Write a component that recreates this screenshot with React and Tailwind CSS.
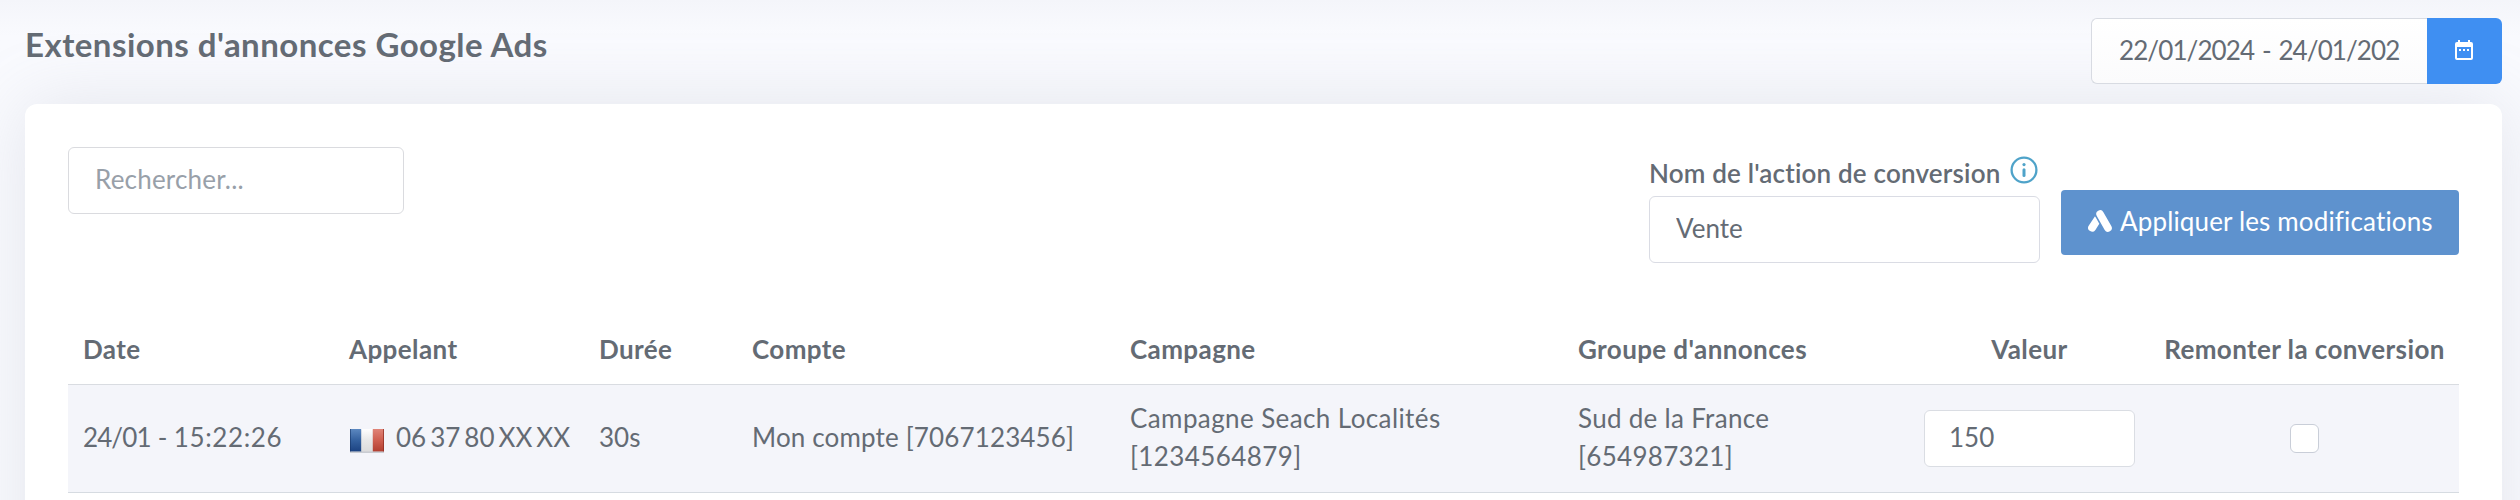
import React, { useState } from 'react';

const CalendarIcon = () => (
  <svg className="w-[18px] h-[20px]" viewBox="0 0 18 20" fill="currentColor">
    <path
      fillRule="evenodd"
      d="M3 0h2v2h8V0h2v2h1a2 2 0 0 1 2 2v14a2 2 0 0 1-2 2H2a2 2 0 0 1-2-2V4a2 2 0 0 1 2-2h1V0zM2 7v11h14V7H2z"
    />
    <path d="M4 9h2v2H4zM8 9h2v2H8zM12 9h2v2h-2z" />
  </svg>
);

const InfoIcon = () => (
  <svg className="w-[28px] h-[28px]" viewBox="0 0 28 28" fill="none">
    <circle cx="14" cy="14" r="12.4" stroke="#4fa3c9" strokeWidth="2.3" />
    <circle cx="14" cy="8.6" r="1.6" fill="#4fa3c9" />
    <path d="M14 13.8v5.6" stroke="#4fa3c9" strokeWidth="3" strokeLinecap="round" />
  </svg>
);

const AdsIcon = () => (
  <svg className="w-[24px] h-[22px]" viewBox="0 0 24 22" fill="none">
    <path d="M12.1 4.1L20 18" stroke="white" strokeWidth="7.6" strokeLinecap="round" />
    <path d="M7 6.2a5.4 5.4 0 0 0 .8 1.4l3.5 6.2-3.9 6.1a4 4 0 0 1-6.9-4L7 6.2z" fill="white" />
  </svg>
);

const FlagFr = () => (
  <svg className="w-[34px] h-[24px]" viewBox="0 0 34 24">
    <defs>
      <linearGradient id="blue" x1="0" y1="0" x2="0" y2="1">
        <stop offset="0" stopColor="#5c88c0" />
        <stop offset="0.5" stopColor="#34619f" />
        <stop offset="1" stopColor="#1c4382" />
      </linearGradient>
      <linearGradient id="white" x1="0" y1="0" x2="0" y2="1">
        <stop offset="0" stopColor="#ffffff" />
        <stop offset="0.5" stopColor="#e8e8e8" />
        <stop offset="1" stopColor="#dcdcdc" />
      </linearGradient>
      <linearGradient id="red" x1="0" y1="0" x2="0" y2="1">
        <stop offset="0" stopColor="#e08478" />
        <stop offset="0.5" stopColor="#cf5f50" />
        <stop offset="1" stopColor="#b23f31" />
      </linearGradient>
    </defs>
    <rect y="1" width="34" height="23" fill="#c9ccd2" />
    <rect width="11.4" height="22.4" fill="url(#blue)" />
    <rect x="11.4" width="11.4" height="22.4" fill="url(#white)" />
    <rect x="22.8" width="11.2" height="22.4" fill="url(#red)" />
    <path d="M.5 0v22.4" stroke="#153567" strokeOpacity=".6" />
    <path d="M33.5 0v22.4" stroke="#8c2a20" strokeOpacity=".7" />
  </svg>
);

const calls = [
  {
    day: '24/01 - ',
    time: '15:22:26',
    phone: ['06', '37', '80', 'XX', 'XX'],
    duration: '30s',
    account: 'Mon compte [7067123456]',
    campaign: ['Campagne Seach Localités', '[1234564879]'],
    group: ['Sud de la France', '[654987321]'],
    value: '150',
  },
];

const App = () => {
  const [search, setSearch] = useState('');
  const [conversion, setConversion] = useState('Vente');

  return (
    <div className="h-[500px] overflow-hidden bg-[#f9fafe] bg-linear-to-b from-[#f4f5fa] to-[#f9fafe] to-[36px] px-[25px] pr-[18px] font-['Lato',sans-serif] text-[26px] leading-[38px] text-[#646b74]">
      {/* Page header */}
      <header className="flex h-[104px] items-start justify-between">
        <h1 className="pt-[24px] text-[33px] leading-[40px] font-bold tracking-[0.47px]">
          Extensions d'annonces Google Ads
        </h1>
        <div className="mt-[18px] flex h-[66px]">
          <input
            className="w-[336px] rounded-l-[6px] border border-r-0 border-[#d8dbe2] bg-linear-to-b from-white to-[#fbfbfc] px-[27px] pb-[3px] tracking-[-0.9px] [word-spacing:2px] outline-none"
            defaultValue="22/01/2024 - 24/01/2024"
          />
          <button className="flex w-[75px] items-center justify-center rounded-r-[6px] bg-[#3f8ff2] pr-[2px] pb-[3px] text-white">
            <CalendarIcon />
          </button>
        </div>
      </header>

      {/* Card */}
      <main className="h-[500px] rounded-t-[12px] bg-white pt-[43px] pr-[43px] pl-[43px] shadow-[0_0_70px_rgba(154,161,171,0.22)]">
        <div className="flex h-[165px] items-start justify-between">
          <input
            className="h-[67px] w-[336px] rounded-[6px] border border-[#dadbdf] px-[26px] pb-[3px] tracking-[0.2px] outline-none placeholder:text-[#98a0a9]"
            placeholder="Rechercher..."
            value={search}
            onChange={(e) => setSearch(e.target.value)}
          />
          <div className="flex">
            <div className="w-[391px]">
              <label className="flex h-[49px] items-start font-semibold tracking-[0.18px]">
                <span className="pt-[7px]">Nom de l'action de conversion</span>
                <span className="ml-[10px] pt-[9px]">
                  <InfoIcon />
                </span>
              </label>
              <input
                className="h-[67px] w-full rounded-[6px] border border-[#dadce4] px-[26px] pb-[3px] outline-none"
                value={conversion}
                onChange={(e) => setConversion(e.target.value)}
              />
            </div>
            <button className="mt-[43px] ml-[21px] flex h-[65px] w-[398px] items-center rounded-[4px] bg-[#5e92ce] pb-[3px] pl-[27px] text-white">
              <AdsIcon />
              <span className="ml-[8px] tracking-[0.15px] whitespace-nowrap">Appliquer les modifications</span>
            </button>
          </div>
        </div>

        {/* Calls table */}
        <table className="w-[2391px] table-fixed border-collapse text-left">
          <colgroup>
            <col className="w-[266px]" />
            <col className="w-[250px]" />
            <col className="w-[153px]" />
            <col className="w-[378px]" />
            <col className="w-[448px]" />
            <col className="w-[346px]" />
            <col className="w-[241px]" />
            <col className="w-[309px]" />
          </colgroup>
          <thead>
            <tr className="h-[72px] border-b border-[#d9dce1] tracking-[0.4px]">
              <th className="px-[15px] pt-[3px] font-bold">Date</th>
              <th className="px-[15px] pt-[3px] font-bold">Appelant</th>
              <th className="px-[15px] pt-[3px] font-bold">Durée</th>
              <th className="px-[15px] pt-[3px] font-bold">Compte</th>
              <th className="px-[15px] pt-[3px] font-bold">Campagne</th>
              <th className="px-[15px] pt-[3px] font-bold">Groupe d'annonces</th>
              <th className="pt-[3px] text-center font-bold">Valeur</th>
              <th className="pt-[3px] text-center font-bold whitespace-nowrap">Remonter la conversion</th>
            </tr>
          </thead>
          <tbody>
            {calls.map((call) => (
              <tr key={call.time} className="h-[108px] border-b border-[#d6dbe1] bg-[#f4f5fa]">
                <td className="px-[15px] pb-[3px] whitespace-nowrap">
                  <span className="tracking-[-0.9px] [word-spacing:1.5px]">{call.day}</span>
                  <span className="tracking-[0.6px]">{call.time}</span>
                </td>
                <td className="pb-[3px] pl-[16px]">
                  <div className="flex items-center">
                    <span className="mr-[12px] pt-[8px]">
                      <FlagFr />
                    </span>
                    <span className="flex gap-[4px]">
                      {call.phone.map((part, i) => (
                        <span key={i}>{part}</span>
                      ))}
                    </span>
                  </div>
                </td>
                <td className="px-[15px] pb-[3px]">{call.duration}</td>
                <td className="px-[15px] pb-[3px] tracking-[0.15px] whitespace-nowrap">{call.account}</td>
                <td className="px-[15px] pb-[3px] tracking-[0.4px]">
                  {call.campaign[0]}
                  <br />
                  {call.campaign[1]}
                </td>
                <td className="px-[15px] pb-[3px] tracking-[0.3px]">
                  {call.group[0]}
                  <br />
                  {call.group[1]}
                </td>
                <td className="px-[15px]">
                  <input
                    className="block h-[57px] w-[211px] rounded-[6px] border border-[#dadde3] bg-white px-[24px] pb-[3px] outline-none"
                    defaultValue={call.value}
                  />
                </td>
                <td>
                  <input
                    type="checkbox"
                    className="mx-auto block h-[29px] w-[29px] appearance-none rounded-[6px] border border-[#c9ced8] bg-white"
                  />
                </td>
              </tr>
            ))}
          </tbody>
        </table>
      </main>
    </div>
  );
};

export default App;
